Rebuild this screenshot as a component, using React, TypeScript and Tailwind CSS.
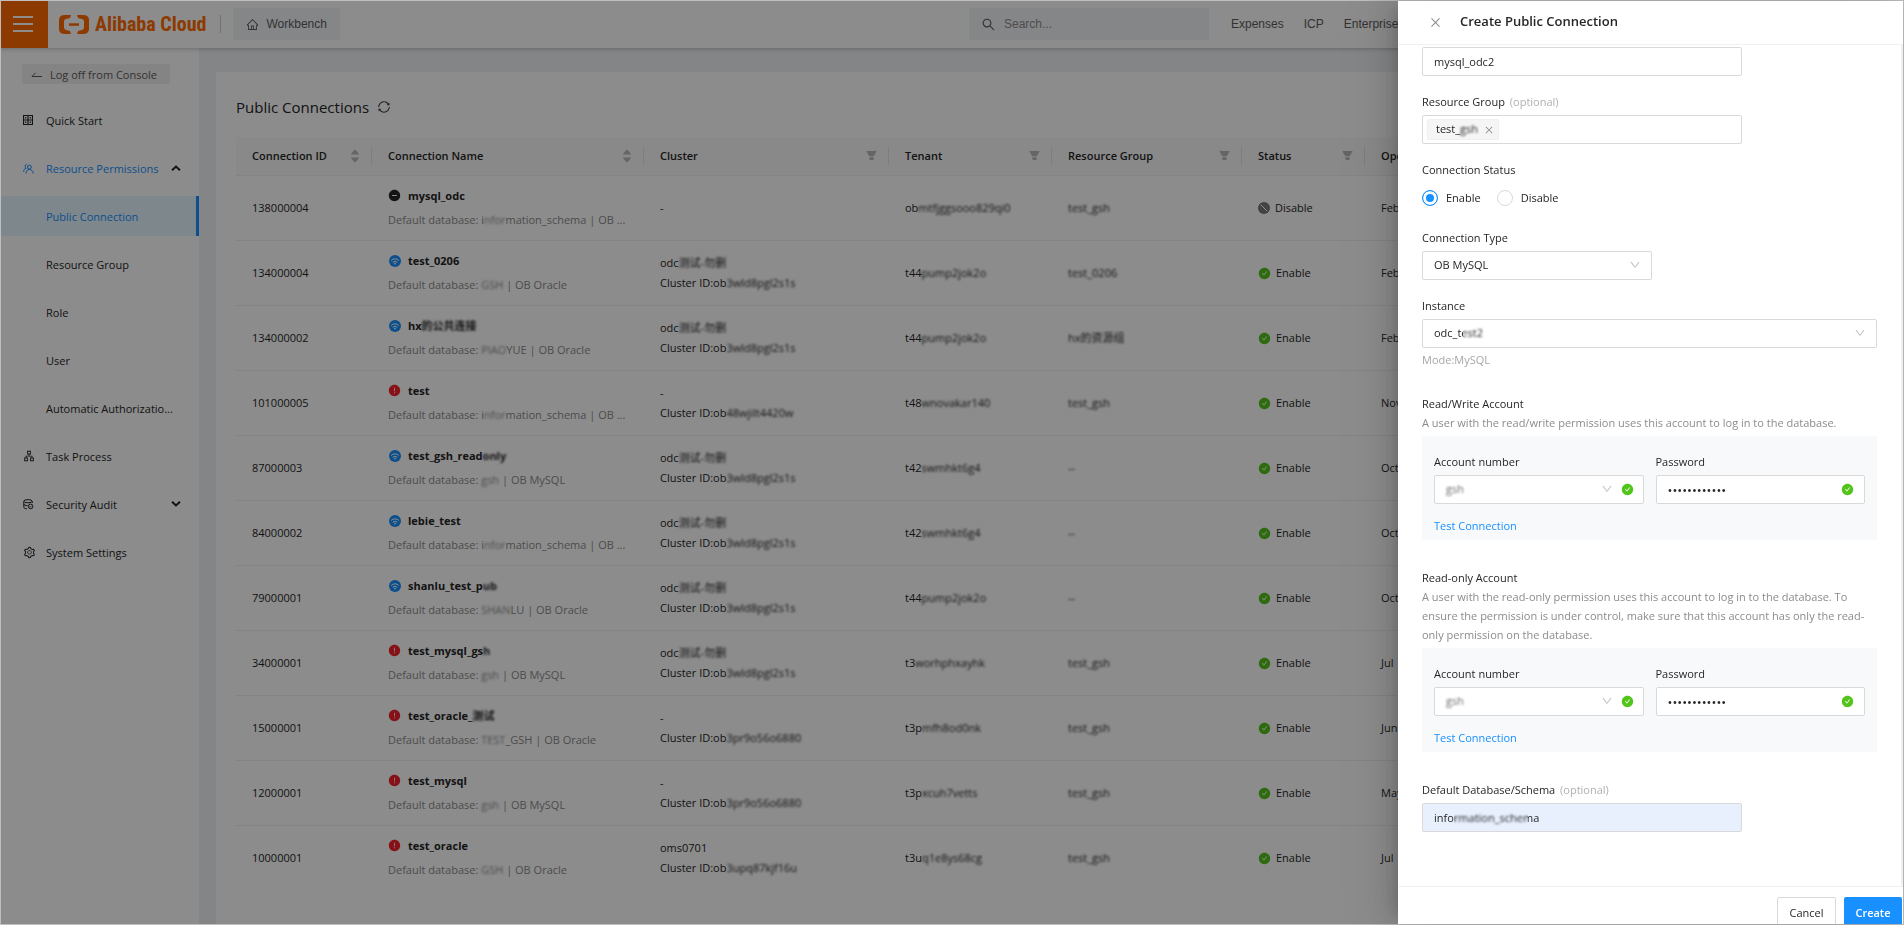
import React, { useState } from "react";
import {
  AiFillCaretDown,
  AiFillCaretUp,
  AiFillCheckCircle,
  AiFillExclamationCircle,
  AiFillFilter,
  AiFillMinusCircle,
  AiOutlineApartment,
  AiOutlineClose,
  AiOutlineDown,
  AiOutlineHome,
  AiOutlineSearch,
  AiOutlineSetting,
  AiOutlineSync,
} from "react-icons/ai";

type Kind = "off" | "ok" | "error";

interface Connection {
  id: string;
  kind: Kind;
  name: string;
  nameHidden?: string;
  db: [string, string, string];
  cluster: [string, string];
  clusterId?: string;
  tenant: [string, string];
  group: string;
  enabled: boolean;
  month: string;
}

const connections: Connection[] = [
  { id: "138000004", kind: "off", name: "mysql_odc", db: ["i", "nfor", "mation_schema | OB ..."], cluster: ["-", ""], tenant: ["ob", "mtfjggsooo829qi0"], group: "test_gsh", enabled: false, month: "Feb" },
  { id: "134000004", kind: "ok", name: "test_0206", db: ["", "GSH", " | OB Oracle"], cluster: ["odc", "测试-勿删"], clusterId: "3wld8pgl2s1s", tenant: ["t44", "pump2jok2o"], group: "test_0206", enabled: true, month: "Feb" },
  { id: "134000002", kind: "ok", name: "hx", nameHidden: "的公共连接", db: ["", "PIAO", "YUE | OB Oracle"], cluster: ["odc", "测试-勿删"], clusterId: "3wld8pgl2s1s", tenant: ["t44", "pump2jok2o"], group: "hx的资源组", enabled: true, month: "Feb" },
  { id: "101000005", kind: "error", name: "test", db: ["i", "nfor", "mation_schema | OB ..."], cluster: ["-", ""], clusterId: "48wjilt4420w", tenant: ["t48", "wnovakar140"], group: "test_gsh", enabled: true, month: "Nov" },
  { id: "87000003", kind: "ok", name: "test_gsh_read", nameHidden: "only", db: ["", "gsh", " | OB MySQL"], cluster: ["odc", "测试-勿删"], clusterId: "3wld8pgl2s1s", tenant: ["t42", "swmhkt6g4"], group: "--", enabled: true, month: "Oct" },
  { id: "84000002", kind: "ok", name: "lebie_test", db: ["i", "nfor", "mation_schema | OB ..."], cluster: ["odc", "测试-勿删"], clusterId: "3wld8pgl2s1s", tenant: ["t42", "swmhkt6g4"], group: "--", enabled: true, month: "Oct" },
  { id: "79000001", kind: "ok", name: "shanlu_test_p", nameHidden: "ub", db: ["", "SHAN", "LU | OB Oracle"], cluster: ["odc", "测试-勿删"], clusterId: "3wld8pgl2s1s", tenant: ["t44", "pump2jok2o"], group: "--", enabled: true, month: "Oct" },
  { id: "34000001", kind: "error", name: "test_mysql_gs", nameHidden: "h", db: ["", "gsh", " | OB MySQL"], cluster: ["odc", "测试-勿删"], clusterId: "3wld8pgl2s1s", tenant: ["t3", "worhphxayhk"], group: "test_gsh", enabled: true, month: "Jul" },
  { id: "15000001", kind: "error", name: "test_oracle_", nameHidden: "测试", db: ["", "TEST", "_GSH | OB Oracle"], cluster: ["-", ""], clusterId: "3pr9o56o6880", tenant: ["t3p", "mfh8od0nk"], group: "test_gsh", enabled: true, month: "Jun" },
  { id: "12000001", kind: "error", name: "test_mysql", db: ["", "gsh", " | OB MySQL"], cluster: ["-", ""], clusterId: "3pr9o56o6880", tenant: ["t3p", "xcuh7vetts"], group: "test_gsh", enabled: true, month: "May" },
  { id: "10000001", kind: "error", name: "test_oracle", db: ["", "GSH", " | OB Oracle"], cluster: ["oms0701", ""], clusterId: "3upq87kjf16u", tenant: ["t3u", "q1e8ys68cg"], group: "test_gsh", enabled: true, month: "Jul" },
];

/* Sensitive part of a value */
const Hidden = ({ children }: { children: React.ReactNode }) => (
  <span className="blur-[1px]">{children}</span>
);

const WifiCircle = () => (
  <svg viewBox="0 0 12 12" className="w-3 h-3 ml-px shrink-0">
    <circle cx="6" cy="6" r="6" fill="#1890ff" />
    <path d="M2.4 5.2a5 5 0 0 1 7.2 0M4 7a2.9 2.9 0 0 1 4 0" fill="none" stroke="#fff" strokeWidth="1" strokeLinecap="round" />
    <circle cx="6" cy="8.6" r="0.9" fill="#fff" />
  </svg>
);

const DisabledCircle = () => (
  <svg viewBox="0 0 12 12" className="w-3 h-3">
    <circle cx="6" cy="6" r="6" fill="#7a7a7a" />
    <path d="M2.8 2.8l6.4 6.4" stroke="#fff" strokeWidth="1" />
  </svg>
);

const KindIcon = ({ kind }: { kind: Kind }) => {
  if (kind === "ok") return <WifiCircle />;
  if (kind === "off") return <AiFillMinusCircle size={13} className="text-[#262626] shrink-0" />;
  return <AiFillExclamationCircle size={13} className="text-[#f5222d] shrink-0" />;
};

const GridIcon = () => (
  <svg viewBox="0 0 10 10" className="w-[10px] h-[10px]" fill="none" stroke="currentColor">
    <path d="M.5.5h9v9h-9zM5 .5v9M.5 5h9" strokeWidth="1.2" />
    <path d="M2.7 2v1.6M7.3 2v1.6M2.7 6.4V8M7.3 6.4V8" strokeWidth="1.2" />
  </svg>
);

const UsersIcon = () => (
  <svg viewBox="0 0 11 11" className="w-[11px] h-[11px]" fill="none" stroke="currentColor" strokeWidth="1">
    <circle cx="6.4" cy="4" r="1.9" />
    <path d="M3 10.5c0-2.6 1.4-4 3.4-4s3.6 1.4 3.9 4M.6 8.8C.7 6.8 1.5 5.7 3 5.3M3.4 5.1C1.7 4.6 1.6 1.7 3.6 1.2" />
  </svg>
);

const AuditIcon = () => (
  <svg viewBox="0 0 11 11" className="w-[11px] h-[11px]" fill="none" stroke="currentColor" strokeWidth="1">
    <ellipse cx="5" cy="2.2" rx="4.2" ry="1.6" />
    <path d="M.8 2.2v6c0 .9 1.4 1.5 3.2 1.6M.8 5c0 .9 1.6 1.6 3.8 1.6M9.2 2.2V4" />
    <circle cx="7.6" cy="7.4" r="2.3" />
    <path d="M6.5 7.4l.8.8 1.3-1.4" strokeWidth="0.8" />
  </svg>
);

const Chevron = ({ up }: { up?: boolean }) => (
  <svg viewBox="0 0 10 6" className="w-[10px] h-[6px]" fill="none" stroke="currentColor" strokeWidth="2">
    <path d={up ? "M1 5.2L5 1.5l4 3.7" : "M1 .8l4 3.7L9 .8"} />
  </svg>
);

const TopBar = () => (
  <header className="relative z-10 flex h-12 items-center bg-white shadow-[0_1px_4px_rgba(0,21,41,0.25)] font-['Liberation_Sans',sans-serif] text-xs text-[#5c5c5c]">
    <button aria-label="Menu" className="flex h-12 w-12 shrink-0 items-center justify-center bg-[#ff6a00] pr-0.5">
      <svg viewBox="0 0 20 16" className="w-5 h-4 text-white" stroke="currentColor" strokeWidth="2">
        <path d="M0 1h20M0 8h20M0 15h20" />
      </svg>
    </button>
    <a href="#" className="ml-[11px] flex items-center gap-1.5 text-[#ff6a00]">
      <svg viewBox="0 0 30 19" className="w-[30px] h-[19px]" fill="currentColor">
        <path d="M12 0H6Q0 0 0 5v9q0 5 6 5h6l-1-3-4-1.1Q5 14.400 5 12.500v-6Q5 4.600 7 4.100L11 3z" />
        <path d="M18 0h6q6 0 6 5v9q0 5-6 5h-6l1-3 4-1.100q2-.5 2-2.400v-6q0-1.900-2-2.400L19 3z" />
        <path d="M10 8.300h10v2.500H10z" />
      </svg>
      <span className="whitespace-nowrap font-['Roboto_Condensed','Liberation_Sans_Narrow','Liberation_Sans',sans-serif] text-[20px] font-bold leading-6">
        Alibaba Cloud
      </span>
    </a>
    <div className="ml-3.5 h-[18px] w-px bg-[#d0d0d0]" />
    <button className="ml-3 flex h-8 w-[107px] items-center gap-[7px] bg-[#f3f5f8] pl-[13px]">
      <AiOutlineHome size={13} />
      Workbench
    </button>
    <label className="ml-auto flex h-8 w-[240px] shrink-0 items-center gap-2 bg-[#f3f5f8] pl-3">
      <AiOutlineSearch size={15} />
      <input aria-label="Search" placeholder="Search..." className="w-40 outline-none placeholder:text-[#8c8c8c]" />
    </label>
    <nav className="ml-[22px] flex w-[673px] shrink-0 gap-5">
      <a href="#">Expenses</a>
      <a href="#">ICP</a>
      <a href="#">Enterprise</a>
    </nav>
  </header>
);

const menu = [
  { label: "Quick Start", icon: <GridIcon /> },
  { label: "Resource Permissions", icon: <UsersIcon />, open: true },
  { label: "Public Connection", active: true },
  { label: "Resource Group" },
  { label: "Role" },
  { label: "User" },
  { label: "Automatic Authorizatio..." },
  { label: "Task Process", icon: <AiOutlineApartment size={12} /> },
  { label: "Security Audit", icon: <AuditIcon />, closed: true },
  { label: "System Settings", icon: <AiOutlineSetting size={13} /> },
];

const SideBar = () => (
  <aside className="w-[199px] shrink-0 bg-white pt-4">
    <button className="ml-[22px] flex h-5 w-[148px] items-center gap-2 bg-[#f0f0f0] pl-[9px] pt-0.5 text-[#5c5c5c]">
      <svg viewBox="0 0 11 6" className="w-[11px] h-[6px]" fill="none" stroke="currentColor" strokeWidth="1">
        <path d="M4.5.8L1 4.5h10" />
      </svg>
      Log off from Console
    </button>
    <nav className="mt-4 flex flex-col gap-2">
      {menu.map((item) => (
        <a
          key={item.label}
          href="#"
          className={`flex h-10 items-center pl-[23px] ${
            item.active ? "border-r-[3px] border-[#1890ff] bg-[#e6f7ff]" : ""
          } ${item.active || item.open ? "text-[#1890ff]" : ""}`}
        >
          <span className="flex w-[23px] shrink-0">{item.icon}</span>
          <span className="whitespace-nowrap pt-0.5">{item.label}</span>
          {(item.open || item.closed) && (
            <span className="ml-auto pr-[18px] text-[#262626]">
              <Chevron up={item.open} />
            </span>
          )}
        </a>
      ))}
    </nav>
  </aside>
);

const SortIcon = () => (
  <span className="flex flex-col items-center text-[#b8b8b8]">
    <AiFillCaretUp size={12} className="-mb-1" />
    <AiFillCaretDown size={12} />
  </span>
);

const columns = [
  { title: "Connection ID", width: "w-[136px]", tool: "sort" },
  { title: "Connection Name", width: "w-[272px]", tool: "sort" },
  { title: "Cluster", width: "w-[245px]", tool: "filter" },
  { title: "Tenant", width: "w-[163px]", tool: "filter" },
  { title: "Resource Group", width: "w-[190px]", tool: "filter" },
  { title: "Status", width: "w-[123px]", tool: "filter" },
  { title: "Operation Time", width: "", tool: "" },
];

const ConnectionTable = () => (
  <table className="mt-[18px] w-full table-fixed border-collapse text-left">
    <thead>
      <tr className="h-[38px] border-b border-[#f0f0f0] bg-[#fafafa]">
        {columns.map((col) => (
          <th key={col.title} className={`${col.width} p-0 font-semibold`}>
            <div className={`flex h-[18px] items-center justify-between pl-4 ${col.tool ? "border-r border-[#e3e3e3] pr-2.5" : ""}`}>
              <span className="pt-px">{col.title}</span>
              {col.tool === "sort" && <SortIcon />}
              {col.tool === "filter" && <AiFillFilter size={13} className="text-[#b8b8b8]" />}
            </div>
          </th>
        ))}
      </tr>
    </thead>
    <tbody>
      {connections.map((c) => (
        <tr key={c.id} className="h-[65px] border-b border-[#f0f0f0] last:border-b-0">
          <td className="pl-4 pt-px">{c.id}</td>
          <td className="pl-4">
            <div className="flex h-6 items-center gap-[7px] whitespace-nowrap font-bold">
              <KindIcon kind={c.kind} />
              <span className="pt-px">
                {c.name}
                {c.nameHidden && <Hidden>{c.nameHidden}</Hidden>}
              </span>
            </div>
            <div className="h-6 whitespace-nowrap leading-6 text-[#8c8c8c]">
              Default database: {c.db[0]}
              <Hidden>{c.db[1]}</Hidden>
              {c.db[2]}
            </div>
          </td>
          <td className="pl-4 leading-5">
            <div>
              {c.cluster[0]}
              <Hidden>{c.cluster[1]}</Hidden>
            </div>
            {c.clusterId && (
              <div>
                Cluster ID:ob<Hidden>{c.clusterId}</Hidden>
              </div>
            )}
          </td>
          <td className="pl-4 pt-px">
            {c.tenant[0]}
            <Hidden>{c.tenant[1]}</Hidden>
          </td>
          <td className="pl-4 pt-px">
            <Hidden>{c.group}</Hidden>
          </td>
          <td className="pl-4 pt-px">
            <div className="flex items-center gap-[5px]">
              {c.enabled ? <AiFillCheckCircle size={13} className="text-[#52c41a]" /> : <DisabledCircle />}
              {c.enabled ? "Enable" : "Disable"}
            </div>
          </td>
          <td className="pl-4 pt-px">{c.month}</td>
        </tr>
      ))}
    </tbody>
  </table>
);

const box = "h-[29px] rounded-xs border border-[#d9d9d9] px-[11px] outline-none";
const labelText = "mb-1 block h-[18px] leading-[18px]";

const AccountPanel = ({ id }: { id: string }) => (
  <div className="mt-1 bg-[#f7f9fb] px-3 pt-[17px] pb-[5px]">
    <div className="grid grid-cols-2 gap-3">
      <div>
        <label htmlFor={`${id}-account`} className={labelText}>Account number</label>
        <div className="relative">
          <select id={`${id}-account`} className={`${box} w-full appearance-none bg-white text-[#6b6b6b]`}>
            <option>gsh</option>
          </select>
          <span className="absolute left-2.5 top-1 h-5 w-6 backdrop-blur-[1px]" />
          <AiOutlineDown size={12} className="absolute right-[31px] top-2 text-[#bfbfbf]" />
          <AiFillCheckCircle size={13} className="absolute right-2.5 top-2 text-[#52c41a]" />
        </div>
      </div>
      <div>
        <label htmlFor={`${id}-password`} className={labelText}>Password</label>
        <div className="relative">
          <input id={`${id}-password`} type="password" defaultValue="************" className={`${box} w-full bg-white text-[13px]`} />
          <AiFillCheckCircle size={13} className="absolute right-[11px] top-2 text-[#52c41a]" />
        </div>
      </div>
    </div>
    <button className="mt-[13px] block h-[18px] text-[#1890ff]">Test Connection</button>
  </div>
);

const CreateDrawer = () => {
  const [status, setStatus] = useState("Enable");

  return (
    <section
      role="dialog"
      aria-label="Create Public Connection"
      className="fixed bottom-px right-px top-px z-30 flex w-[505px] flex-col overflow-hidden bg-white shadow-[-6px_0_16px_-8px_rgba(0,0,0,0.2),-9px_0_28px_rgba(0,0,0,0.12),-12px_0_48px_16px_rgba(0,0,0,0.06)]"
    >
      <div className="flex h-11 shrink-0 items-center gap-[18px] border-b border-[#f0f0f0] pb-px pl-[31px]">
        <button aria-label="Close" className="text-[#8c8c8c]">
          <AiOutlineClose size={13} />
        </button>
        <h2 className="text-[13px] font-semibold">Create Public Connection</h2>
      </div>

      <div className="min-h-0 flex-1 overflow-hidden border-r-2 border-[#f0f0f0] pl-6 pr-6 pt-0.5">
        <input aria-label="Connection Name" defaultValue="mysql_odc2" className={`${box} block w-[320px] bg-white`} />

        <div className="mt-[17px]">
          <label htmlFor="group" className={labelText}>
            Resource Group <span className="ml-0.5 text-[#b0b0b0]">(optional)</span>
          </label>
          <div className="flex h-[29px] w-[320px] items-center rounded-xs border border-[#d9d9d9] px-1">
            <span className="flex h-[21px] items-center gap-1.5 rounded-xs border border-[#f0f0f0] bg-[#f5f5f5] pl-2 pr-1">
              <span>
                test_<Hidden>gsh</Hidden>
              </span>
              <button aria-label="Remove" className="text-[#8c8c8c]">
                <AiOutlineClose size={10} />
              </button>
            </span>
            <input id="group" className="min-w-0 flex-1 outline-none" />
          </div>
        </div>

        <fieldset className="mt-[17px]">
          <legend className={labelText}>Connection Status</legend>
          <div className="flex h-[29px] items-center gap-4">
            {["Enable", "Disable"].map((value) => (
              <label key={value} className="flex items-center gap-2">
                <input
                  type="radio"
                  name="status"
                  checked={status === value}
                  onChange={() => setStatus(value)}
                  className="h-4 w-4 appearance-none rounded-full border border-[#d9d9d9] bg-white checked:border-[#1890ff] checked:bg-[#1890ff] checked:shadow-[inset_0_0_0_3px_#fff]"
                />
                <span className="pt-0.5">{value}</span>
              </label>
            ))}
          </div>
        </fieldset>

        <div className="mt-[17px]">
          <label htmlFor="type" className={labelText}>Connection Type</label>
          <div className="relative w-[230px]">
            <select id="type" className={`${box} w-full appearance-none bg-white`}>
              <option>OB MySQL</option>
            </select>
            <AiOutlineDown size={12} className="absolute right-[11px] top-2 text-[#bfbfbf]" />
          </div>
        </div>

        <div className="mt-[17px]">
          <label htmlFor="instance" className={labelText}>Instance</label>
          <div className="relative">
            <select id="instance" className={`${box} w-full appearance-none bg-white`}>
              <option>odc_test2</option>
            </select>
            <span className="absolute left-[41px] top-1 h-5 w-[22px] backdrop-blur-[1px]" />
            <AiOutlineDown size={12} className="absolute right-[11px] top-2 text-[#bfbfbf]" />
          </div>
          <p className="mt-[3px] leading-[18px] text-[#a6a6a6]">Mode:MySQL</p>
        </div>

        <div className="mt-[26px]">
          <h3 className="leading-[18px]">Read/Write Account</h3>
          <p className="leading-[19px] text-[#8c8c8c]">
            A user with the read/write permission uses this account to log in to the database.
          </p>
          <AccountPanel id="rw" />
        </div>

        <div className="mt-[29px]">
          <h3 className="leading-[18px]">Read-only Account</h3>
          <p className="leading-[19px] text-[#8c8c8c]">
            A user with the read-only permission uses this account to log in to the database. To ensure the permission is
            under control, make sure that this account has only the read-only permission on the database.
          </p>
          <AccountPanel id="ro" />
        </div>

        <div className="mt-[29px]">
          <label htmlFor="schema" className={labelText}>
            Default Database/Schema <span className="ml-0.5 text-[#b0b0b0]">(optional)</span>
          </label>
          <div className="relative w-[320px]">
            <input id="schema" defaultValue="information_schema" className={`${box} w-full bg-[#e8f0fe]`} />
            <span className="absolute left-8 top-1 h-5 w-[74px] backdrop-blur-[1px]" />
          </div>
        </div>
      </div>

      <div className="flex h-[38px] shrink-0 items-start justify-end gap-2 border-t border-[#f0f0f0] pr-px pt-2.5">
        <button className="h-8 w-[59px] shrink-0 rounded-xs border border-[#d9d9d9]">Cancel</button>
        <button className="h-8 w-[58px] shrink-0 rounded-xs bg-[#1890ff] font-semibold text-white">Create</button>
      </div>
    </section>
  );
};

const App = () => {
  return (
    <div className="flex h-screen flex-col overflow-hidden bg-[#f0f2f5] font-['Open_Sans','Noto_Sans_CJK_SC',sans-serif] text-[11px] text-[#262626]">
      <TopBar />
      <div className="flex min-h-0 flex-1">
        <SideBar />
        <main className="min-w-0 flex-1 overflow-hidden pl-[17px] pt-6">
          <div className="h-full bg-white px-5 pt-[23px]">
            <div className="flex h-6 items-center gap-2">
              <h1 className="text-[15px]">Public Connections</h1>
              <button aria-label="Refresh" className="text-[#404040]">
                <AiOutlineSync size={14} />
              </button>
            </div>
            <ConnectionTable />
          </div>
        </main>
      </div>

      {/* Mask and drawer */}
      <div className="fixed inset-0 z-20 border border-[#bfbfbf] bg-black/45 bg-clip-padding" />
      <CreateDrawer />
    </div>
  );
};

export default App;
